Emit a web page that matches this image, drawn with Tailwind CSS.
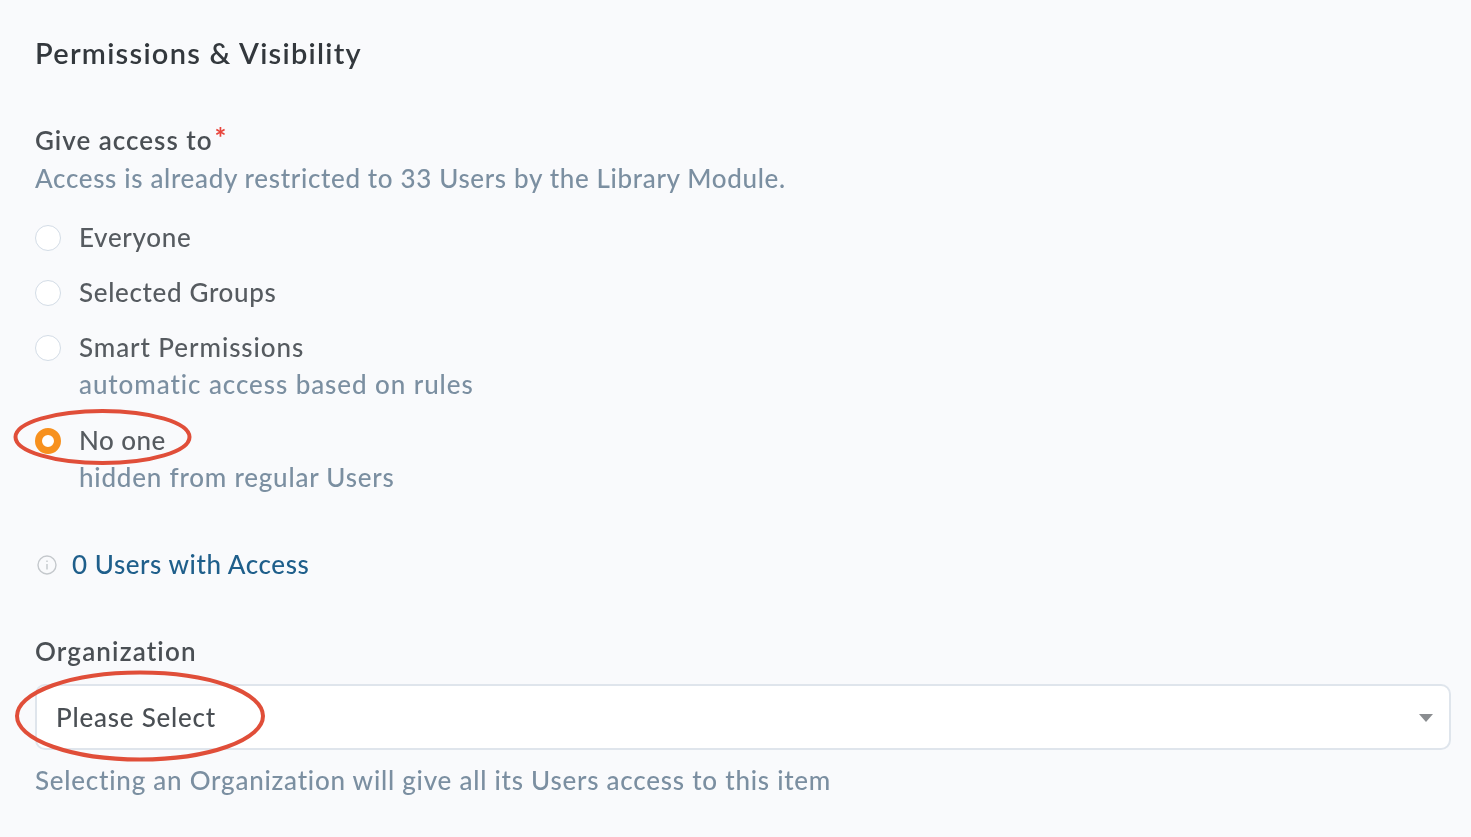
<!DOCTYPE html>
<html>
<head>
<meta charset="utf-8">
<script src="https://cdn.jsdelivr.net/npm/@tailwindcss/browser@4"></script>
</head>
<body class="m-0">
<div class="relative h-[837px] w-[1471px] overflow-hidden bg-[#f9fafc] pl-[35px] pr-[20px] pt-[34px] font-['Lato','Noto_Sans',sans-serif] text-[26px] font-medium leading-[37px] text-[#565b60] blur-[0.7px]">
  <h2 class="h-[38px] text-[29px] font-semibold leading-[38px] tracking-[1.25px] text-[#33383d]">Permissions &amp; Visibility</h2>

  <div class="mt-[50px] flex h-[37px] items-center font-semibold tracking-[1px] text-[#4a4f54]">Give access to<span class="mb-[8px] ml-[2px] text-[28px] font-bold leading-none text-[#e8453c]">*</span></div>
  <p class="mt-[1px] h-[37px] tracking-[0.65px] text-[#7b8fa1]">Access is already restricted to 33 Users by the Library Module.</p>

  <div class="mt-[22px] flex flex-col gap-[18px]">
    <label class="flex h-[37px] items-center gap-[18px]">
      <span class="mt-[1px] h-[26px] w-[26px] rounded-full border-[1.5px] border-[#d3dce6] bg-white"></span>
      <span class="tracking-[0.66px]">Everyone</span>
    </label>
    <label class="flex h-[37px] items-center gap-[18px]">
      <span class="mt-[1px] h-[26px] w-[26px] rounded-full border-[1.5px] border-[#d3dce6] bg-white"></span>
      <span class="tracking-[0.66px]">Selected Groups</span>
    </label>
    <div>
      <label class="flex h-[37px] items-center gap-[18px]">
        <span class="mt-[1px] h-[26px] w-[26px] rounded-full border-[1.5px] border-[#d3dce6] bg-white"></span>
        <span class="tracking-[0.92px]">Smart Permissions</span>
      </label>
      <p class="ml-[44px] h-[37px] tracking-[0.92px] text-[#7b8fa1]">automatic access based on rules</p>
    </div>
  </div>

  <div class="mt-[18px]">
    <label class="flex h-[38px] items-center gap-[18px]">
      <span class="mt-[2px] h-[26px] w-[26px] rounded-full border-[7px] border-[#f7911e] bg-white"></span>
      <span class="tracking-[0.48px]">No one</span>
    </label>
    <p class="ml-[44px] h-[37px] tracking-[0.78px] text-[#7b8fa1]">hidden from regular Users</p>
  </div>

  <div class="mt-[50px] flex h-[37px] items-center gap-[15px] font-medium tracking-[0.56px] text-[#1f5f8b]">
    <svg class="ml-[2px] h-[20px] w-[20px]" viewBox="0 0 20 20" fill="none" stroke="#c4c8cc" stroke-width="1.4"><circle cx="10" cy="10" r="9"/><path d="M10 9v5.5M10 5.5v1.4"/></svg>
    <span>0 Users with Access</span>
  </div>

  <div class="mt-[50px] h-[37px] font-semibold tracking-[1.15px] text-[#4a4f54]">Organization</div>
  <div class="mt-[14px] flex h-[66px] w-[1416px] items-center justify-between rounded-[10px] border-2 border-[#dfe5ec] bg-white pl-[19px] pr-[16px] text-[#4a4f54]">
    <span class="tracking-[0.77px]">Please Select</span>
    <svg class="mt-[2px] h-[8px] w-[14px]" viewBox="0 0 14 8" fill="#8a8d90"><path d="M0 0h14L7 8z"/></svg>
  </div>
  <p class="mt-[12px] h-[37px] tracking-[0.76px] text-[#7b8fa1]">Selecting an Organization will give all its Users access to this item</p>

  <svg class="pointer-events-none absolute left-0 top-0" width="1471" height="837" fill="none" stroke="#e04e39" stroke-width="4">
    <ellipse cx="102.5" cy="437" rx="87" ry="26"/>
    <ellipse cx="140" cy="716" rx="123" ry="43.5"/>
  </svg>
</div>
</body>
</html>
